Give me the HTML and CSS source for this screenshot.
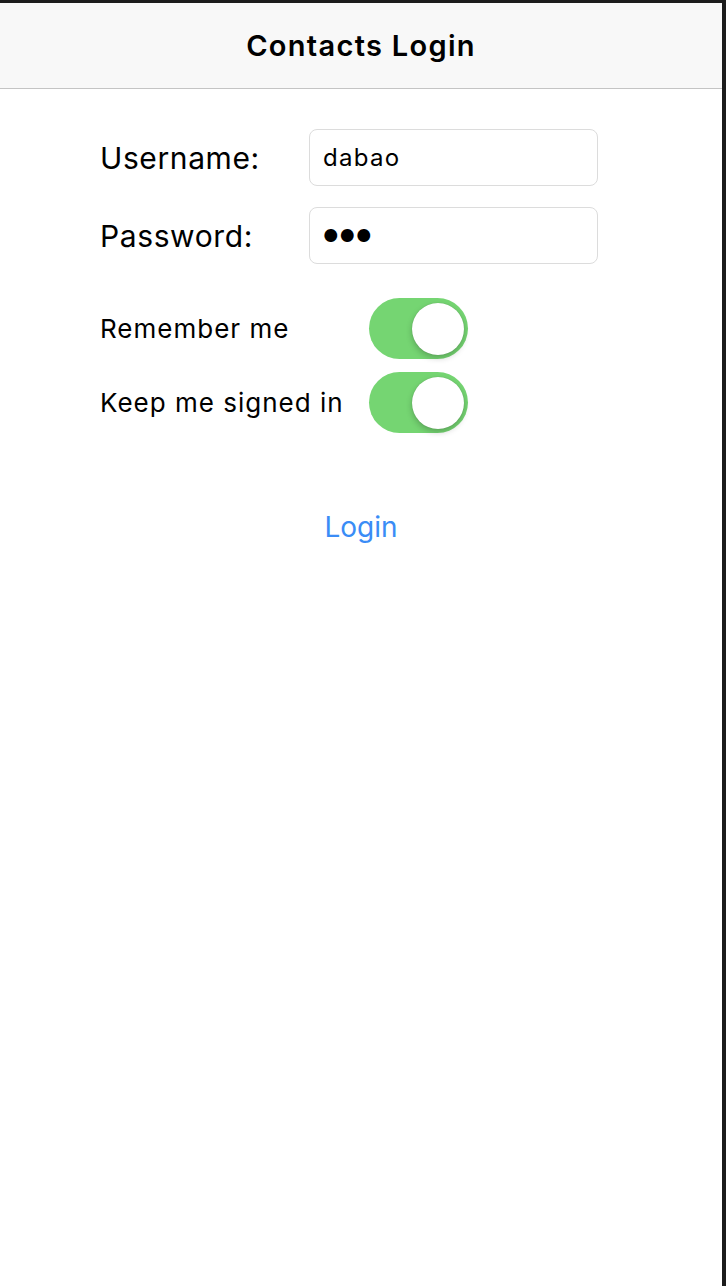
FILE: index.html
```html
<!DOCTYPE html>
<html lang="en">
<head>
<meta charset="utf-8">
<title>Contacts Login</title>
<link rel="stylesheet" href="styles.css">
</head>
<body>
<div class="frame">
  <header class="nav">
    <h1 class="nav-title">Contacts Login</h1>
  </header>
  <main class="form">
    <div class="field">
      <span class="field-label">Username:</span>
      <div class="text-input">dabao</div>
    </div>
    <div class="field">
      <span class="field-label">Password:</span>
      <div class="text-input secure">&#9679;&#9679;&#9679;</div>
    </div>
    <div class="switches">
      <div class="switch-row">
        <span class="switch-label">Remember me</span>
        <div class="switch on"><span class="knob"></span></div>
      </div>
      <div class="switch-row">
        <span class="switch-label">Keep me signed in</span>
        <div class="switch on"><span class="knob"></span></div>
      </div>
    </div>
    <div class="actions">
      <span class="login-btn">Login</span>
    </div>
  </main>
</div>
</body>
</html>
```
FILE: styles.css
```css
html, body {
  margin: 0;
  padding: 0;
  background: #1c1c1c;
}
body {
  font-family: Inter, "Liberation Sans", sans-serif;
  color: #000;
}
.frame {
  box-sizing: border-box;
  width: 726px;
  height: 1286px;
  border-top: 3px solid #1c1c1c;
  border-right: 4px solid #1c1c1c;
  background: #fff;
  display: flex;
  flex-direction: column;
}
.nav {
  height: 85px;
  background: #f8f8f8;
  border-bottom: 1px solid #c4c4c4;
  display: flex;
  align-items: center;
  justify-content: center;
}
.nav-title {
  margin: 0;
  font-size: 29px;
  font-weight: 600;
  letter-spacing: 1.3px;
}
.form {
  padding: 40px 0 0 100px;
  display: flex;
  flex-direction: column;
}
.field {
  display: flex;
  align-items: center;
  margin-bottom: 21px;
}
.field-label {
  width: 209px;
  font-size: 30px;
  letter-spacing: 0.6px;
}
.text-input {
  box-sizing: border-box;
  width: 289px;
  height: 57px;
  border: 1px solid #dcdcdc;
  border-radius: 8px;
  padding-left: 13px;
  display: flex;
  align-items: center;
  font-size: 24px;
  letter-spacing: 1.3px;
}
.text-input.secure {
  font-size: 17px;
  letter-spacing: 1px;
}
.switches {
  margin-top: 13px;
  display: flex;
  flex-direction: column;
  gap: 13px;
}
.switch-row {
  display: flex;
  align-items: center;
}
.switch-label {
  width: 269px;
  font-size: 26px;
  letter-spacing: 1px;
}
.switch {
  box-sizing: border-box;
  width: 99px;
  height: 61px;
  border-radius: 31px;
  background: #75d572;
  display: flex;
  align-items: center;
  justify-content: flex-end;
  padding-right: 4px;
}
.knob {
  width: 52px;
  height: 52px;
  border-radius: 50%;
  background: #fff;
  box-shadow: 0 3px 6px rgba(0,0,0,0.22), 0 0 1px rgba(0,0,0,0.2);
}
.actions {
  margin-top: 77px;
  padding-right: 100px;
  display: flex;
  justify-content: center;
}
.login-btn {
  font-size: 28px;
  line-height: 34px;
  color: #3a8cf6;
}
```
